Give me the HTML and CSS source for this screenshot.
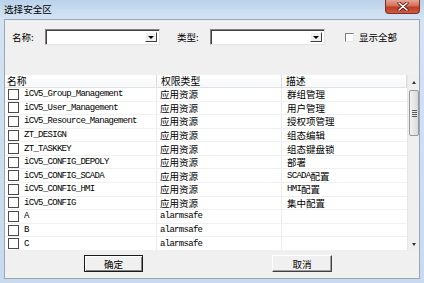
FILE: index.html
```html
<!DOCTYPE html>
<html>
<head>
<meta charset="utf-8">
<link rel="stylesheet" href="styles.css">
</head>
<body>
<div class="window">
  <div class="titlebar">
    <span class="title">选择安全区</span>
    <div class="close">
      <svg width="12" height="9" viewBox="0 0 12 9"><path d="M2 1 L10 8 M10 1 L2 8" stroke="#5a1a12" stroke-width="3.2" stroke-linecap="round"/><path d="M2 1 L10 8 M10 1 L2 8" stroke="#ffffff" stroke-width="1.6" stroke-linecap="round"/></svg>
    </div>
  </div>
  <div class="client">
    <div class="filters">
      <span class="lbl">名称:</span>
      <div class="combo"><div class="drop"><i class="tri-down"></i></div></div>
      <span class="lbl lbl2">类型:</span>
      <div class="combo"><div class="drop"><i class="tri-down"></i></div></div>
      <label class="showall"><span class="cb-small"></span><span>显示全部</span></label>
    </div>
    <div class="list">
      <div class="grid">
        <div class="head">
          <div class="hc c1">名称</div>
          <div class="hc c2">权限类型</div>
          <div class="hc c3">描述</div>
        </div>
        <div class="row"><div class="cell c1"><span class="cb"></span><span class="en">iCV5_Group_Management</span></div><div class="cell c2">应用资源</div><div class="cell c3">群组管理</div></div>
        <div class="row"><div class="cell c1"><span class="cb"></span><span class="en">iCV5_User_Management</span></div><div class="cell c2">应用资源</div><div class="cell c3">用户管理</div></div>
        <div class="row"><div class="cell c1"><span class="cb"></span><span class="en">iCV5_Resource_Management</span></div><div class="cell c2">应用资源</div><div class="cell c3">授权项管理</div></div>
        <div class="row"><div class="cell c1"><span class="cb"></span><span class="en">ZT_DESIGN</span></div><div class="cell c2">应用资源</div><div class="cell c3">组态编辑</div></div>
        <div class="row"><div class="cell c1"><span class="cb"></span><span class="en">ZT_TASKKEY</span></div><div class="cell c2">应用资源</div><div class="cell c3">组态键盘锁</div></div>
        <div class="row"><div class="cell c1"><span class="cb"></span><span class="en">iCV5_CONFIG_DEPOLY</span></div><div class="cell c2">应用资源</div><div class="cell c3">部署</div></div>
        <div class="row"><div class="cell c1"><span class="cb"></span><span class="en">iCV5_CONFIG_SCADA</span></div><div class="cell c2">应用资源</div><div class="cell c3"><span class="en">SCADA</span>配置</div></div>
        <div class="row"><div class="cell c1"><span class="cb"></span><span class="en">iCV5_CONFIG_HMI</span></div><div class="cell c2">应用资源</div><div class="cell c3"><span class="en">HMI</span>配置</div></div>
        <div class="row"><div class="cell c1"><span class="cb"></span><span class="en">iCV5_CONFIG</span></div><div class="cell c2">应用资源</div><div class="cell c3">集中配置</div></div>
        <div class="row"><div class="cell c1"><span class="cb"></span><span class="en">A</span></div><div class="cell c2"><span class="en">alarmsafe</span></div><div class="cell c3"></div></div>
        <div class="row"><div class="cell c1"><span class="cb"></span><span class="en">B</span></div><div class="cell c2"><span class="en">alarmsafe</span></div><div class="cell c3"></div></div>
        <div class="row"><div class="cell c1"><span class="cb"></span><span class="en">C</span></div><div class="cell c2"><span class="en">alarmsafe</span></div><div class="cell c3"></div></div>
      </div>
      <div class="vscroll">
        <div class="arrow"><i class="tri-up-s"></i></div>
        <div class="thumb"><span class="grip"></span><span class="grip"></span><span class="grip"></span><span class="grip"></span></div>
        <div class="track"></div>
        <div class="arrow"><i class="tri-down-s"></i></div>
      </div>
    </div>
    <div class="buttons">
      <div class="btn default">确定</div>
      <div class="btn">取消</div>
    </div>
  </div>
</div>
</body>
</html>
```
FILE: styles.css
```css
html, body {
  margin: 0;
  padding: 0;
}
body {
  width: 424px;
  height: 283px;
  overflow: hidden;
  font-family: "Noto Sans CJK SC", "DejaVu Sans", sans-serif;
  font-size: 9.5px;
  color: #000;
}
.window {
  width: 424px;
  height: 283px;
  display: flex;
  flex-direction: column;
  background: linear-gradient(180deg, #b9d1ea 0px, #c9dcf0 10px, #d3e3f4 19px, #c7daef 100%);
}
.titlebar {
  height: 19px;
  display: flex;
  align-items: flex-start;
  flex-shrink: 0;
}
.title {
  margin-left: 4px;
  margin-top: 3px;
  line-height: 12px;
  font-size: 9.6px;
}
.close {
  margin-left: auto;
  margin-right: 4px;
  width: 35px;
  height: 14px;
  box-sizing: border-box;
  border: 1px solid #7b3126;
  border-top: none;
  border-radius: 0 0 4px 4px;
  background: linear-gradient(180deg, #e6a493 0%, #d36e5a 45%, #bf3b24 55%, #cd5b40 100%);
  display: flex;
  align-items: center;
  justify-content: center;
}
.close svg { display: block; margin-top: -1px; }
.client {
  flex: 1;
  margin: 0 4px 4px 4px;
  border: 1px solid #9aa6b4;
  background: #f0f0f0;
  display: flex;
  flex-direction: column;
  min-height: 0;
}
.filters {
  display: flex;
  align-items: center;
  height: 16px;
  margin: 9px 0 30px 0;
  padding-left: 7px;
}
.lbl {
  width: 33px;
  line-height: 12px;
}
.lbl2 { margin-left: 17px; }
.combo {
  width: 115px;
  height: 16px;
  box-sizing: border-box;
  background: #fff;
  border-style: solid;
  border-width: 1px;
  border-color: #828282 #e3e3e3 #e3e3e3 #828282;
  box-shadow: inset 1px 1px 0 #404040;
  display: flex;
  justify-content: flex-end;
  padding: 2px;
}
.drop {
  width: 12px;
  height: 10px;
  box-sizing: border-box;
  background: #f0f0f0;
  border-style: solid;
  border-width: 1px;
  border-color: #fff #404040 #404040 #fff;
  display: flex;
  align-items: center;
  justify-content: center;
}
.tri-down {
  width: 0;
  height: 0;
  border-left: 3px solid transparent;
  border-right: 3px solid transparent;
  border-top: 3px solid #000;
}
.showall {
  margin-left: 20px;
  display: flex;
  align-items: center;
  line-height: 12px;
}
.cb-small {
  width: 9px;
  height: 9px;
  box-sizing: border-box;
  border-style: solid;
  border-width: 1px;
  border-color: #7d7d7d #e8e8e8 #e8e8e8 #7d7d7d;
  background: #fff;
  margin-right: 5px;
}
.list {
  height: 176px;
  display: flex;
  flex-shrink: 0;
  background: #fff;
}
.grid {
  width: 402px;
  display: flex;
  flex-direction: column;
  background: #fff;
}
.head {
  height: 13px;
  display: flex;
  border-bottom: 1px solid #e2e2e2;
  box-sizing: border-box;
  background: linear-gradient(180deg, #ffffff 0%, #f7f8fa 100%);
}
.hc {
  box-sizing: border-box;
  line-height: 12px;
  font-size: 9.8px;
  border-right: 1px solid #dcdcdc;
}
.head .c1 { padding-left: 2px; }
.head .c2 { padding-left: 4px; }
.head .c3 { padding-left: 4px; }
.c1 { width: 152px; }
.c2 { width: 125px; }
.c3 { width: 125px; }
.row {
  height: 13.6px;
  display: flex;
  border-bottom: 1px solid #f0f0f0;
  box-sizing: border-box;
}
.cell {
  box-sizing: border-box;
  display: flex;
  align-items: center;
  line-height: 12px;
  border-right: 1px solid #ececec;
  white-space: nowrap;
  overflow: hidden;
}
.row .c1 { padding-left: 3px; }
.row .c2 { padding-left: 3px; }
.row .c3 { padding-left: 5px; border-right: none; }
.cb {
  width: 11px;
  height: 11px;
  box-sizing: border-box;
  border: 1px solid #4a4a4a;
  background: #fff;
  margin-right: 5px;
  flex-shrink: 0;
}
.en {
  font-family: "Liberation Mono", "DejaVu Sans Mono", monospace;
  font-size: 9px;
  letter-spacing: -0.7px;
  color: #000;
}
.vscroll {
  width: 12px;
  display: flex;
  flex-direction: column;
  background: #efefef;
  border-left: 1px solid #e6e6e6;
  box-sizing: border-box;
}
.arrow {
  height: 14px;
  display: flex;
  align-items: center;
  justify-content: center;
  flex-shrink: 0;
}
.tri-up-s {
  width: 0;
  height: 0;
  border-left: 2.5px solid transparent;
  border-right: 2.5px solid transparent;
  border-bottom: 3px solid #333;
}
.tri-down-s {
  width: 0;
  height: 0;
  border-left: 2.5px solid transparent;
  border-right: 2.5px solid transparent;
  border-top: 3px solid #333;
}
.thumb {
  height: 46px;
  margin: 1px 0 0 1px;
  width: 10px;
  box-sizing: border-box;
  border: 1px solid #979797;
  border-radius: 2px;
  background: linear-gradient(90deg, #f2f2f2 0%, #e6e6e6 50%, #d8d8d8 100%);
  display: flex;
  flex-direction: column;
  align-items: center;
  justify-content: center;
  gap: 1px;
  flex-shrink: 0;
}
.grip {
  width: 5px;
  height: 1px;
  background: #5c5c5c;
}
.track { flex: 1; }
.buttons {
  flex: 1;
  display: flex;
  align-items: flex-start;
  padding: 4px 0 0 79px;
  gap: 129px;
}
.btn {
  width: 60px;
  height: 17px;
  box-sizing: border-box;
  background: #f0f0f0;
  border-style: solid;
  border-width: 1px;
  border-color: #ffffff #404040 #404040 #ffffff;
  box-shadow: inset -1px -1px 0 #a0a0a0;
  display: flex;
  align-items: center;
  justify-content: center;
  line-height: 12px;
  font-size: 9.6px;
}
.btn.default {
  width: 59px;
  border-color: #1a1a1a;
  box-shadow: inset 1px 1px 0 #fff, inset -1px -1px 0 #808080;
}
```
